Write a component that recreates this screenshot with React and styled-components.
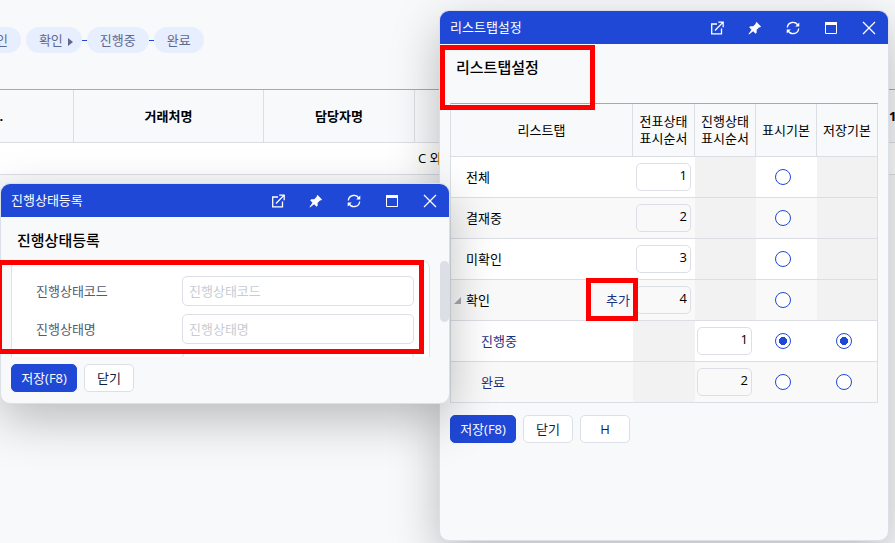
import React, { useState } from "react";
import styled, { createGlobalStyle } from "styled-components";

const GlobalStyle = createGlobalStyle`
  * {
    box-sizing: border-box;
  }
  body {
    margin: 0;
    background-color: #f7f9fb;
  }
  body, button, input {
    font-family: "Open Sans", "Noto Sans CJK KR", sans-serif;
    font-size: 13px;
    line-height: 17px;
    color: #000;
  }
`;

const Page = styled.div`
  position: relative;
  min-height: 100vh;
  overflow: hidden;
  padding-top: 27px;
`;

const Steps = styled.nav`
  display: flex;
  align-items: center;
  margin-left: -41px;
  margin-bottom: 36px;
`;

const Step = styled.button`
  display: flex;
  align-items: center;
  gap: 5px;
  height: 26px;
  padding: 0 13px;
  padding-right: ${({ $arrow }) => ($arrow ? "9px" : "13px")};
  margin-right: ${({ $gap }) => ($gap ? "5px" : "0")};
  border: none;
  border-radius: 13px;
  background-color: #e7eefe;
  color: #5f6890;
  white-space: nowrap;
`;

const Dash = styled.span`
  width: 5px;
  height: 1px;
  background-color: #1f48d6;
`;

const ListTable = styled.table`
  width: calc(100% + 117px);
  margin-left: -117px;
  table-layout: fixed;
  border-collapse: separate;
  border-spacing: 0;
  border-top: 1px solid #9dabbd;
`;

const ListHead = styled.th`
  width: ${({ $width }) => $width};
  height: 53px;
  padding: 0 2px;
  border-right: 1px solid #dbdfe4;
  border-bottom: 1px solid #dbdfe4;
  font-weight: 700;
  text-align: ${({ $align }) => $align || "center"};
  &:last-child {
    border-right: none;
  }
`;

const ListCell = styled.td`
  height: 32px;
  padding: 0 3px;
  background-color: #fff;
  border-bottom: 1px solid #dbdfe4;
`;

const Popup = styled.section`
  position: absolute;
  isolation: isolate;
  top: ${({ $top }) => $top};
  left: ${({ $left }) => $left};
  right: ${({ $right }) => $right};
  bottom: ${({ $bottom }) => $bottom};
  width: 450px;
  border: 1px solid #dbdfe6;
  border-radius: 10px;
  background-color: #f7f9fb;
  box-shadow: 0 16px 48px rgba(0, 0, 0, 0.25);
`;

const TitleBar = styled.header`
  display: flex;
  align-items: center;
  height: 33px;
  padding-left: 10px;
  border-radius: 9px 9px 0 0;
  background-color: #1f48d6;
  color: #fff;
`;

const BarTitle = styled.span`
  flex: 1;
`;

const BarButton = styled.button`
  display: flex;
  align-items: center;
  justify-content: center;
  width: 38px;
  height: 33px;
  padding: 0;
  border: none;
  background: none;
  color: #fff;
`;

const Heading = styled.h2`
  margin: 0;
  padding: 12px 16px ${({ $space }) => $space};
  font-size: 15px;
  line-height: 22px;
  font-weight: 500;
`;

const Actions = styled.div`
  display: flex;
  gap: 7px;
  padding: ${({ $top }) => $top} 10px 11px;
`;

const Button = styled.button`
  width: ${({ $primary }) => ($primary ? "66px" : "50px")};
  height: 28px;
  padding: 0;
  border: 1px solid ${({ $primary }) => ($primary ? "#1f48d6" : "#dcdfe5")};
  border-radius: 5px;
  background-color: ${({ $primary }) => ($primary ? "#1f48d6" : "#fff")};
  color: ${({ $primary }) => ($primary ? "#fff" : "#0f1e40")};
`;

const Marker = styled.div`
  position: absolute;
  z-index: 1;
  top: ${({ $top }) => $top};
  left: ${({ $left }) => $left};
  width: ${({ $width }) => $width};
  height: ${({ $height }) => $height};
  border: 5px solid #fe0000;
  pointer-events: none;
`;

const TabTable = styled.table`
  width: 428px;
  margin-left: 10px;
  table-layout: fixed;
  border-collapse: separate;
  border-spacing: 0;
  border-top: 1px solid #9dabbd;
  border-left: 1px solid #dbdfe4;
`;

const TabHead = styled.th`
  width: ${({ $width }) => $width};
  height: 53px;
  padding: 0;
  border-right: 1px solid #dbdfe4;
  border-bottom: 1px solid #dbdfe4;
  font-weight: 400;
`;

const TabRow = styled.tr`
  background-color: #fff;
  &:nth-child(even) {
    background-color: #f9f9f9;
  }
`;

const TabCell = styled.td`
  position: relative;
  height: 41px;
  padding: 0 ${({ $radio }) => ($radio ? "8px" : "0")} 0 0;
  border-bottom: 1px solid #dbdfe4;
  background-color: ${({ $off }) => ($off ? "#f2f2f2" : "transparent")};
  text-align: center;
  &:last-child {
    padding-right: 6px;
    border-right: 1px solid #dbdfe4;
  }
`;

const NameCell = styled.div`
  display: flex;
  align-items: center;
  justify-content: space-between;
  padding-left: ${({ $child }) => ($child ? "30px" : "15px")};
  padding-right: 3px;
  color: ${({ $child }) => ($child ? "#1b3282" : "#000")};
`;

const Toggle = styled.svg`
  position: absolute;
  left: 3px;
  top: 17px;
`;

const AddLink = styled.a`
  color: #1b3282;
  text-decoration: none;
`;

const OrderInput = styled.input`
  display: block;
  width: 55px;
  height: 28px;
  margin-left: ${({ $first }) => ($first ? "3px" : "2px")};
  padding: 0 3px 4px;
  border: 1px solid #dcdfe5;
  border-radius: 5px;
  background-color: transparent;
  text-align: right;
  outline: none;
`;

const Radio = styled.input`
  appearance: none;
  display: block;
  width: 16px;
  height: 16px;
  margin: 0 auto;
  border: 1px solid #1f48d6;
  border-radius: 50%;
  background-color: #fff;
  &:checked {
    background-image: radial-gradient(circle, #1f48d6 0 4px, #fff 4px);
  }
`;

const ScrollArea = styled.div`
  display: flex;
  justify-content: space-between;
  height: 97px;
  padding-left: 10px;
  overflow: hidden;
`;

const Thumb = styled.div`
  width: 9px;
  height: 61px;
  margin-top: 1px;
  border-radius: 5px;
  background-color: #dce0e6;
`;

const Form = styled.form`
  width: 419px;
  height: 160px;
  display: grid;
  grid-template-columns: 146px 1fr;
  grid-auto-rows: 30px;
  row-gap: 8px;
  align-items: center;
  padding: 15px 15px 15px 24px;
  border: 1px solid #dfe2e7;
  border-radius: 8px;
  background-color: #fff;
`;

const Label = styled.label`
  color: #545a70;
`;

const TextInput = styled.input`
  grid-column: 2;
  width: 100%;
  height: 30px;
  padding: 0 6px;
  border: 1px solid #dcdfe5;
  border-radius: 5px;
  outline: none;
  &::placeholder {
    color: #c8ccd3;
  }
`;

const icons = [
  {
    name: "새창",
    draw: (
      <g fill="none" stroke="currentColor" strokeWidth="1.3">
        <path d="M7 3H1.7v9.8h9.8V7.5" />
        <path d="M5 9.5 12.6 1.6M8.2 1.2h5v5" />
      </g>
    ),
  },
  {
    name: "고정",
    draw: (
      <path
        fill="currentColor"
        d="M8.6 1 13 5.4l-1 1-.8-.2-2.6 2.7.1 2.7-1.1 1.1-2.5-2.5L1 13.4l-.5-.5 3-4.2L1.2 6.3l1.1-1.1 2.9.1L7.8 2.8 7.6 2z"
      />
    ),
  },
  {
    name: "새로고침",
    draw: (
      <g fill="none" stroke="currentColor" strokeWidth="1.3">
        <path d="M1.3 6.5A5.7 5.7 0 0 1 12 4.4M12.7 7.5A5.7 5.7 0 0 1 2 9.6" />
        <path fill="currentColor" stroke="none" d="M13.3 1.4v4.1H9.2zM.7 12.6V8.5h4.1z" />
      </g>
    ),
  },
  {
    name: "최대화",
    draw: (
      <g>
        <path d="M1.5 1.5h11v11h-11z" fill="none" stroke="currentColor" />
        <path d="M1 1h12v3H1z" fill="currentColor" />
      </g>
    ),
  },
  {
    name: "닫기",
    draw: <path d="M1 1l12 12M13 1 1 13" fill="none" stroke="currentColor" strokeWidth="1.3" />,
  },
];

const tabs = [
  { name: "전체", slip: 1 },
  { name: "결재중", slip: 2 },
  { name: "미확인", slip: 3 },
  { name: "확인", slip: 4, parent: true },
  { name: "진행중", order: 1, child: true },
  { name: "완료", order: 2, child: true },
];

const PopupBar = ({ title }) => (
  <TitleBar>
    <BarTitle>{title}</BarTitle>
    {icons.map((icon) => (
      <BarButton key={icon.name} type="button" aria-label={icon.name}>
        <svg width="14" height="14" viewBox="0 0 14 14">
          {icon.draw}
        </svg>
      </BarButton>
    ))}
  </TitleBar>
);

const TabSetting = () => {
  const [view, setView] = useState("진행중");
  const [save, setSave] = useState("진행중");

  return (
    <Popup $top="10px" $right="6px" $bottom="2px">
      <PopupBar title="리스트탭설정" />
      <Heading $space="25px">리스트탭설정</Heading>
      <TabTable>
        <thead>
          <tr>
            <TabHead>리스트탭</TabHead>
            <TabHead $width="62px">전표상태<br />표시순서</TabHead>
            <TabHead $width="61px">진행상태<br />표시순서</TabHead>
            <TabHead $width="61px">표시기본</TabHead>
            <TabHead $width="61px">저장기본</TabHead>
          </tr>
        </thead>
        <tbody>
          {tabs.map((tab) => (
            <TabRow key={tab.name}>
              <TabCell>
                <NameCell $child={tab.child}>
                  {tab.parent && (
                    <Toggle width="7" height="7">
                      <path d="M7 0v7H0z" fill="#a4a9b1" />
                    </Toggle>
                  )}
                  {tab.name}
                  {tab.parent && <AddLink href="#add">추가</AddLink>}
                </NameCell>
                {tab.parent && <Marker $top="-2px" $left="135px" $width="52px" $height="43px" />}
              </TabCell>
              <TabCell $off={!tab.slip}>
                {tab.slip && <OrderInput $first aria-label={`${tab.name} 전표상태 표시순서`} defaultValue={tab.slip} />}
              </TabCell>
              <TabCell $off={!tab.order}>
                {tab.order && <OrderInput aria-label={`${tab.name} 진행상태 표시순서`} defaultValue={tab.order} />}
              </TabCell>
              <TabCell $radio>
                <Radio
                  type="radio"
                  name="view"
                  aria-label={`${tab.name} 표시기본`}
                  checked={view === tab.name}
                  onChange={() => setView(tab.name)}
                />
              </TabCell>
              <TabCell $radio $off={!tab.child}>
                {tab.child && (
                  <Radio
                    type="radio"
                    name="save"
                    aria-label={`${tab.name} 저장기본`}
                    checked={save === tab.name}
                    onChange={() => setSave(tab.name)}
                  />
                )}
              </TabCell>
            </TabRow>
          ))}
        </tbody>
      </TabTable>
      <Actions $top="12px">
        <Button type="button" $primary>저장(F8)</Button>
        <Button type="button">닫기</Button>
        <Button type="button">H</Button>
      </Actions>
      <Marker $top="34px" $left="0" $width="155px" $height="65px" />
    </Popup>
  );
};

const StatusForm = () => (
  <Popup $top="183px" $left="0">
    <PopupBar title="진행상태등록" />
    <Heading $space="9px">진행상태등록</Heading>
    <ScrollArea>
      <Form>
        <Label htmlFor="code">진행상태코드</Label>
        <TextInput id="code" placeholder="진행상태코드" />
        <Label htmlFor="name">진행상태명</Label>
        <TextInput id="name" placeholder="진행상태명" />
        <TextInput aria-label="비고" />
      </Form>
      <Thumb />
    </ScrollArea>
    <Actions $top="7px">
      <Button type="button" $primary>저장(F8)</Button>
      <Button type="button">닫기</Button>
    </Actions>
    <Marker $top="76px" $left="-4px" $width="427px" $height="94px" />
  </Popup>
);

const App = () => {
  return (
    <Page>
      <GlobalStyle />
      <Steps>
        <Step $gap>미확인</Step>
        <Step $arrow>
          확인
          <svg width="5" height="12">
            <path d="M0 4l5 4-5 4z" fill="#5f6890" />
          </svg>
        </Step>
        <Dash />
        <Step>진행중</Step>
        <Dash />
        <Step>완료</Step>
      </Steps>
      <ListTable>
        <thead>
          <tr>
            <ListHead $width="191px">일자-No.</ListHead>
            <ListHead $width="190px">거래처명</ListHead>
            <ListHead $width="151px">담당자명</ListHead>
            <ListHead>품목명</ListHead>
            <ListHead $width="8px" $align="left">1</ListHead>
          </tr>
        </thead>
        <tbody>
          <tr>
            <ListCell />
            <ListCell />
            <ListCell />
            <ListCell>C 외 1건</ListCell>
            <ListCell />
          </tr>
        </tbody>
      </ListTable>
      <TabSetting />
      <StatusForm />
    </Page>
  );
};

export default App;
